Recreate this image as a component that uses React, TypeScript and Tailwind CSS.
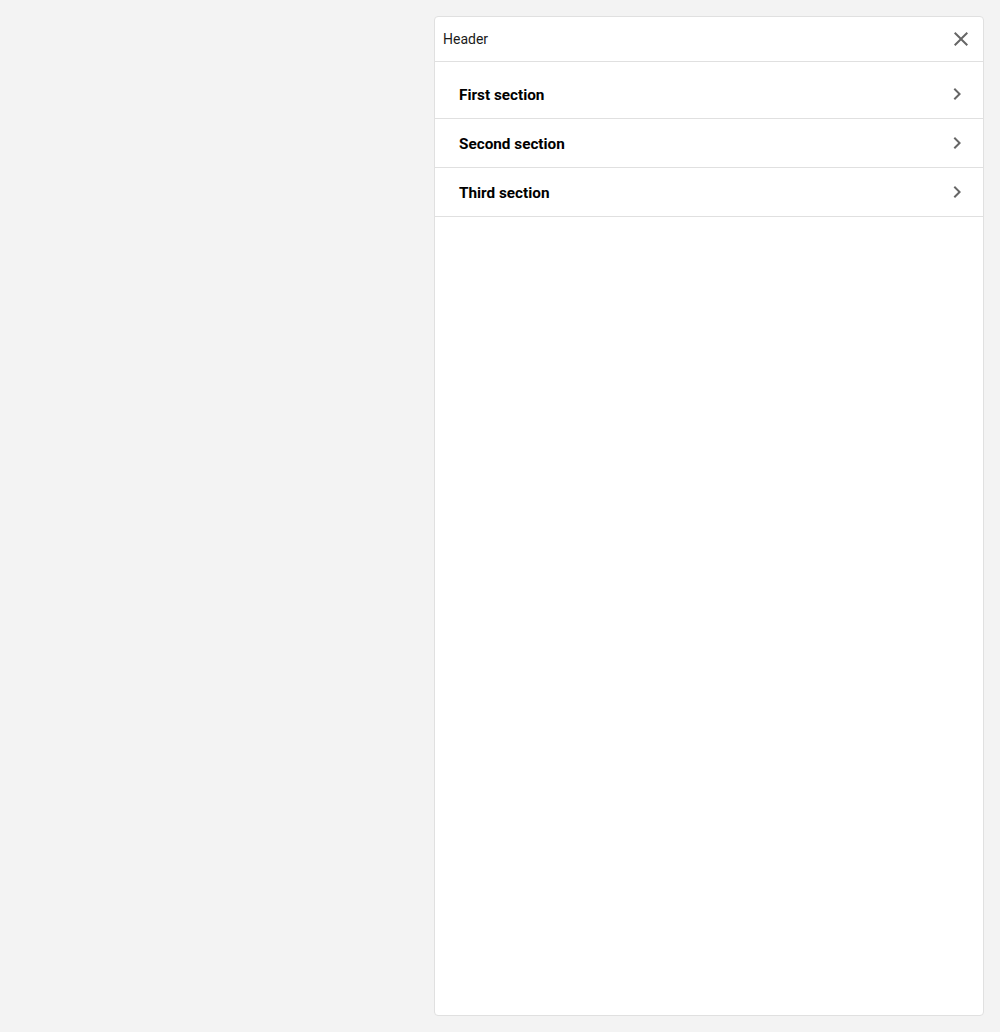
const sections = ['First section', 'Second section', 'Third section'];

function CloseIcon() {
  return (
    <svg width="24" height="24" viewBox="0 0 24 24" fill="currentColor">
      <path d="M19 6.41L17.59 5 12 10.59 6.41 5 5 6.41 10.59 12 5 17.59 6.41 19 12 13.41 17.59 19 19 17.59 13.41 12z" />
    </svg>
  );
}

function ChevronIcon() {
  return (
    <svg width="24" height="24" viewBox="0 0 24 24" fill="currentColor">
      <path d="M10 6L8.59 7.41 13.17 12l-4.58 4.59L10 18l6-6z" />
    </svg>
  );
}

export default function App() {
  return (
    <div className="min-h-screen bg-[#f3f3f3] flex justify-end p-4" style={{ fontFamily: 'Roboto, "Noto Sans", sans-serif' }}>
      <div className="w-[550px] h-[1000px] bg-white border border-[#e0e0e0] rounded flex flex-col">
        {/* Header */}
        <div className="h-[45px] flex items-center justify-between pl-2 pr-[10px] border-b border-[#e0e0e0]">
          <span className="text-[14px] text-[#1a1a1a] pt-[1px]">Header</span>
          <button className="text-[#666]" aria-label="Close">
            <CloseIcon />
          </button>
        </div>

        {/* Sections */}
        <div className="pt-2">
          {sections.map((s) => (
            <div key={s} className="h-[49px] flex items-center justify-between pl-6 pr-[14px] border-b border-[#e0e0e0]">
              <span className="text-[15.3px] font-bold text-black pt-[2px]">{s}</span>
              <span className="text-[#666]">
                <ChevronIcon />
              </span>
            </div>
          ))}
        </div>
      </div>
    </div>
  );
}
